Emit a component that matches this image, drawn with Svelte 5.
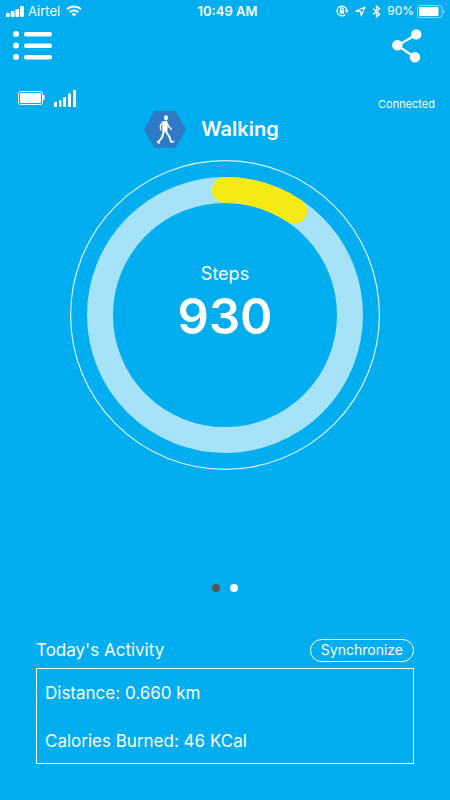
<script>
    let steps = 930;
    let goal = 10000;
    let distance = "0.660";
    let calories = 46;
    let connected = true;
    let page = 0;

    const radius = 125;
    const circumference = 2 * Math.PI * radius;

    // length of the yellow arc
    $: progress = Math.min(steps / goal, 1) * circumference;
</script>

<style>
    :global(body) {
        margin: 0;
        background-color: #00aeef;
    }

    .app {
        display: flex;
        flex-direction: column;
        min-height: 100vh;
        box-sizing: border-box;
        padding-bottom: 36px;
        background-color: #00aeef;
        color: #fff;
        font-family: Inter, "Liberation Sans", sans-serif;
    }

    svg {
        display: block;
        flex: none;
    }

    button {
        padding: 0;
        border: none;
        background: none;
        color: inherit;
        font-family: inherit;
        cursor: pointer;
    }

    .status-bar {
        display: grid;
        grid-template-columns: 1fr auto 1fr;
        align-items: center;
        height: 22px;
        padding: 0 5px 0 6px;
        font-size: 13px;
        line-height: 22px;
    }

    .status-left,
    .status-right {
        display: flex;
        align-items: center;
        gap: 4px;
    }

    .status-left svg:last-child {
        margin-left: 2px;
    }

    .status-right {
        justify-content: flex-end;
        gap: 6px;
        font-size: 12px;
    }

    .charge {
        display: flex;
        align-items: center;
        gap: 3px;
    }

    .time {
        padding-left: 4px;
        font-weight: 600;
    }

    .toolbar {
        display: flex;
        justify-content: space-between;
        align-items: center;
        height: 48px;
        padding: 0 27px 0 12px;
    }

    .device {
        display: flex;
        justify-content: space-between;
        align-items: flex-end;
        height: 41px;
        padding: 0 15px 0 18px;
        font-size: 11px;
        line-height: 14px;
    }

    .device-icons {
        display: flex;
        align-items: center;
        gap: 9px;
        padding-bottom: 4px;
    }

    .mode {
        display: flex;
        justify-content: center;
        align-items: center;
        gap: 15px;
        margin-right: 27px;
    }

    .mode h1 {
        margin: 0;
        font-size: 20px;
        line-height: 37px;
        font-weight: 600;
    }

    .dial {
        display: grid;
        align-self: center;
        width: 69%;
        max-width: 310px;
        margin-top: 12px;
    }

    .dial svg,
    .count {
        grid-area: 1 / 1;
    }

    .dial svg {
        width: 100%;
        height: auto;
    }

    .count {
        display: flex;
        flex-direction: column;
        align-items: center;
        justify-content: center;
        padding-bottom: 20px;
    }

    .count span {
        font-size: 18px;
        line-height: 24px;
    }

    .count strong {
        font-size: 49px;
        line-height: 62px;
        font-weight: 600;
    }

    .pager {
        display: flex;
        justify-content: center;
        gap: 10px;
        margin-top: auto;
        padding-bottom: 46px;
    }

    .dot {
        width: 8px;
        height: 8px;
        border-radius: 50%;
        background-color: #fff;
    }

    .dot.active {
        background-color: #555;
    }

    .activity {
        margin: 0 36px;
    }

    .activity-header {
        display: flex;
        justify-content: space-between;
        align-items: center;
        padding-bottom: 6px;
    }

    .activity h2 {
        margin: 0;
        font-size: 17px;
        line-height: 24px;
        font-weight: 400;
    }

    .sync {
        height: 23px;
        padding: 0 10px;
        border: 1px solid #fff;
        border-radius: 12px;
        font-size: 14px;
        line-height: 20px;
    }

    .stats {
        display: flex;
        flex-direction: column;
        gap: 24px;
        padding: 12px 8px 10px;
        border: 1px solid #fff;
        font-size: 17px;
        line-height: 24px;
    }

    .stats p {
        margin: 0;
    }
</style>

<div class="app">
    <div class="status-bar">
        <div class="status-left">
            <svg width="18" height="11" viewBox="0 0 18 11" fill="#fff">
                <rect x="0" y="7" width="3.8" height="4" rx="1" />
                <rect x="4.7" y="5" width="3.8" height="6" rx="1" />
                <rect x="9.4" y="3" width="3.8" height="8" rx="1" />
                <rect x="14.1" y="0" width="3.8" height="11" rx="1" />
            </svg>
            <span>Airtel</span>
            <svg width="16" height="12" viewBox="0 0 16 12" fill="none" stroke="#fff" stroke-width="2">
                <path d="M1 4.4a10 10 0 0 1 14 0" />
                <path d="M3.7 7.2a6.2 6.2 0 0 1 8.6 0" />
                <path d="M8 11.6 5.6 9.2a3.4 3.4 0 0 1 4.8 0z" fill="#fff" stroke="none" />
            </svg>
        </div>
        <div class="time">10:49 AM</div>
        <div class="status-right">
            <!-- rotation lock -->
            <svg width="13" height="12" viewBox="0 0 13 12" fill="none" stroke="#fff" stroke-width="1.2">
                <path d="M9.2 9.7A4.9 4.9 0 1 1 10.8 5.2" />
                <path d="M8.8 5.3h4L10.8 8z" fill="#fff" stroke="none" />
                <rect x="3.7" y="5.3" width="4.4" height="3.4" fill="#fff" stroke="none" />
                <path d="M4.6 5.5V4.2a1.3 1.3 0 0 1 2.6 0v1.3" />
            </svg>
            <!-- location -->
            <svg width="11" height="11" viewBox="0 0 11 11" fill="none" stroke="#fff" stroke-width="1.2">
                <path d="M10 1 .9 5.2 5.6 5.6 6.2 10z" stroke-linejoin="round" />
            </svg>
            <!-- bluetooth -->
            <svg width="9" height="13" viewBox="0 0 9 13" fill="none" stroke="#fff" stroke-width="1.3">
                <path d="M1 3.5 7.6 9.3 4.5 12V1l3.1 2.7L1 9.5" />
            </svg>
            <div class="charge">
                <span>90%</span>
                <svg width="28" height="13" viewBox="0 0 28 13">
                    <rect x=".5" y=".5" width="24.5" height="12" rx="2.5" fill="none" stroke="#8fd9f7" />
                    <rect x="2" y="2" width="19.5" height="9" rx="1" fill="#fff" />
                    <path d="M26.3 4.5v4a2.1 2.1 0 0 0 0-4z" fill="#8fd9f7" />
                </svg>
            </div>
        </div>
    </div>

    <div class="toolbar">
        <button aria-label="Menu">
            <svg width="41" height="30" viewBox="0 0 41 30" fill="#fff">
                <circle cx="4" cy="3" r="3" />
                <circle cx="4" cy="14.5" r="3" />
                <circle cx="4" cy="26" r="3" />
                <rect x="12" y="1" width="28" height="4.5" rx="2" />
                <rect x="12" y="12.5" width="28" height="4.5" rx="2" />
                <rect x="12" y="24" width="28" height="4.5" rx="2" />
            </svg>
        </button>
        <button aria-label="Share">
            <svg width="31" height="34" viewBox="0 0 31 34" fill="#fff">
                <path d="M24.5 5.5 5.5 16.5 23 28.5" fill="none" stroke="#fff" stroke-width="2.2" />
                <circle cx="24.3" cy="5.4" r="5.2" />
                <circle cx="5.3" cy="16.2" r="5.2" />
                <circle cx="23" cy="28.2" r="5.2" />
            </svg>
        </button>
    </div>

    <div class="device">
        <div class="device-icons">
            <svg width="27" height="14" viewBox="0 0 27 14">
                <rect x=".5" y=".5" width="24" height="13" rx="2" fill="none" stroke="#fff" />
                <rect x="2" y="2" width="21" height="10" rx="1" fill="#fff" />
                <path d="M25 4h1.6v5H25z" fill="#fff" />
            </svg>
            <svg width="22" height="18" viewBox="0 0 22 18" fill="#fff">
                <rect x="0" y="13" width="3" height="5" />
                <rect x="5" y="11" width="2.4" height="7" />
                <rect x="9" y="8" width="3" height="10" />
                <rect x="14" y="4.5" width="3" height="13.5" />
                <rect x="19" y="1" width="3" height="17" />
            </svg>
        </div>
        <span>{connected ? "Connected" : "Disconnected"}</span>
    </div>

    <div class="mode">
        <svg width="42" height="37" viewBox="0 0 42 37">
            <path d="M10.5 0h21L42 18.5 31.5 37h-21L0 18.5z" fill="#2d7bc4" />
            <ellipse cx="22" cy="6.8" rx="2" ry="2.5" fill="#fff" />
            <path d="M18.6 10.8 22.8 10 23.4 16 23 20.5 18.6 20.5z" fill="#fff" stroke="#fff" stroke-width=".6" stroke-linejoin="round" />
            <g fill="none" stroke="#fff" stroke-linecap="round" stroke-linejoin="round">
                <path d="M18.8 11.2 16.4 14.5 16.6 18.8" stroke-width="1.4" />
                <path d="M23 11.5 24.6 15.5 27.4 18.2" stroke-width="1.4" />
                <path d="M19.8 20.5 18 26.5 14.5 31" stroke-width="2" />
                <path d="M22 20.5 25 25 27 30.5" stroke-width="2" />
                <path d="M13.5 30.5 15 32.2M27.2 31 29.8 30.5" stroke-width="1.5" />
            </g>
        </svg>
        <h1>Walking</h1>
    </div>

    <div class="dial">
        <svg viewBox="0 0 310 310" fill="none">
            <circle cx="155" cy="155" r="154.4" stroke="#d9f1fb" stroke-width="1.2" />
            <circle cx="155" cy="155" r={radius} stroke="#a6e3f9" stroke-width="26" />
            <circle
                cx="155"
                cy="155"
                r={radius}
                stroke="#f5ea14"
                stroke-width="26"
                stroke-linecap="round"
                stroke-dasharray="{progress} {circumference}"
                transform="rotate(-90 155 155)"
            />
        </svg>
        <div class="count">
            <span>Steps</span>
            <strong>{steps}</strong>
        </div>
    </div>

    <div class="pager">
        {#each [0, 1] as i}
            <button class="dot" class:active={i === page} aria-label="Page {i + 1}" on:click={() => (page = i)}></button>
        {/each}
    </div>

    <section class="activity">
        <div class="activity-header">
            <h2>Today's Activity</h2>
            <button class="sync">Synchronize</button>
        </div>
        <div class="stats">
            <p>Distance: {distance} km</p>
            <p>Calories Burned: {calories} KCal</p>
        </div>
    </section>
</div>
